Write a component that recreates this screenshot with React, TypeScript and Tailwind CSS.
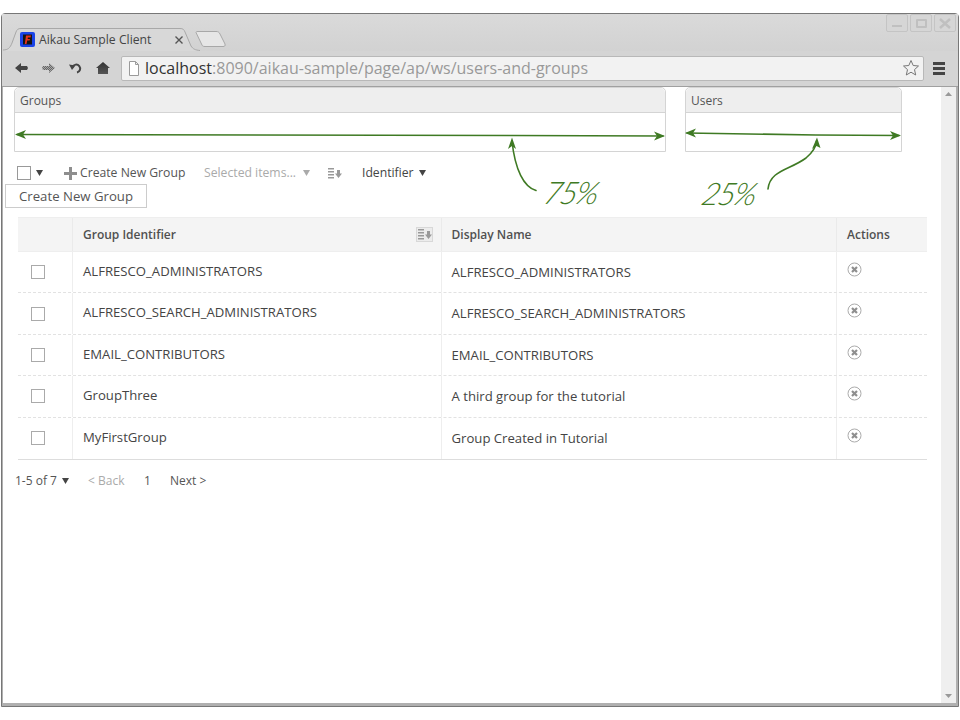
import React from "react";

const rows = [
  { id: "ALFRESCO_ADMINISTRATORS", name: "ALFRESCO_ADMINISTRATORS" },
  { id: "ALFRESCO_SEARCH_ADMINISTRATORS", name: "ALFRESCO_SEARCH_ADMINISTRATORS" },
  { id: "EMAIL_CONTRIBUTORS", name: "EMAIL_CONTRIBUTORS" },
  { id: "GroupThree", name: "A third group for the tutorial" },
  { id: "MyFirstGroup", name: "Group Created in Tutorial" },
];

const Caret = ({ className }: { className: string }) => (
  <svg width="7" height="6" viewBox="0 0 7 6" className={className}>
    <path d="M0 0h7L3.500 6z" fill="currentColor" />
  </svg>
);

const SortIcon = () => (
  <svg width="14" height="11" viewBox="0 0 14 11" fill="#999999">
    <path d="M0 0h6v1.500H0zM0 3h6v1.500H0zM0 6h6v1.500H0zM0 9h6v1.500H0zM9 2h3v3.500h2L10.500 10 7 5.500h2z" />
  </svg>
);

const RemoveIcon = () => (
  <svg width="15" height="15" viewBox="0 0 15 15" fill="none">
    <circle cx="7.500" cy="7.500" r="6.500" stroke="#ababab" />
    <path d="M5 5l5 5M10 5l-5 5" stroke="#8f8f8f" strokeWidth="2.200" />
  </svg>
);

const Panel = ({ title, width }: { title: string; width: string }) => (
  <div className={`${width} h-[65px] rounded-t-[5px] border border-[#d4d4d4] bg-white`}>
    <div className="h-[25px] rounded-t-[5px] border-b border-[#d4d4d4] bg-[#eeeeee] pl-[5px] text-[12px] leading-[25px] text-[#555555]">
      {title}
    </div>
  </div>
);

const WinButton = ({ children }: { children: React.ReactNode }) => (
  <div className="flex h-[18px] w-[22px] items-center justify-center rounded-[2px] border border-[#c4c4c4] bg-[#d6d6d6]">
    {children}
  </div>
);

const Annotations = () => (
  <>
    <svg width="960" height="720" viewBox="0 0 960 720" fill="none" className="pointer-events-none absolute left-0 top-0">
      <g stroke="#3f7a24" strokeWidth="1.600" strokeLinecap="round">
        <path d="M17 134.500L512 135.500L663 136" />
        <path d="M687 133L816 135L899 135.500" />
        <path d="M536 190.500C524 187 515 170 512 141" />
        <path d="M768 189C770 170 790 170 806 158C812 153 816 148 816.500 141" />
      </g>
      <g fill="#3f7a24">
        <path d="M15 134.500L26 130L23 134.500L26 139z" />
        <path d="M665 136L654 131.500L657 136L654 140.500z" />
        <path d="M685 133L696 128.500L693 133L696 137.500z" />
        <path d="M901 135.500L890 131L893 135.500L890 140z" />
        <path d="M512 137.500L508 149L512 146L516 149z" />
        <path d="M817 137.500L812 149L816.500 146L820.500 148z" />
      </g>
    </svg>
    <span className="absolute left-[545px] top-[173px] skew-x-[-14deg] font-['Lato'] text-[31px] font-light italic leading-[38px] tracking-[-2px] text-[#3f7a24]">
      75%
    </span>
    <span className="absolute left-[703px] top-[174px] skew-x-[-14deg] font-['Lato'] text-[31px] font-light italic leading-[38px] tracking-[-2px] text-[#3f7a24]">
      25%
    </span>
  </>
);

export default function App() {
  return (
    <div className="relative h-[720px] w-[960px] overflow-hidden bg-white pl-[1px] pt-[13px] font-['Open_Sans',sans-serif]">
      <div className="flex h-[694px] w-[958px] flex-col rounded-t-[4px] border border-[#777777] bg-[#d4d4d4]">
        {/* Tab strip */}
        <div className="relative flex h-[37px] bg-gradient-to-b from-[#dadada] to-[#d2d2d2] pl-[1px] pt-[14px]">
          <div className="relative h-[23px] w-[197px] pl-[17px] pt-[4px]">
            <svg width="197" height="23" viewBox="0 0 197 23" fill="none" className="absolute left-0 top-0">
              <path d="M0 23V22C5 22 7 20 9 15L13 4C14 1.500 15 .5 18 .5H177C180 .5 181 1.500 182 4L188 18C190 21 192 22 197 22.500V23z" fill="#d8d8d8" />
              <path d="M0 22C5 22 7 20 9 15L13 4C14 1.500 15 .5 18 .5H177C180 .5 181 1.500 182 4L188 18C190 21 192 22 197 22.500" stroke="#a8a8a8" />
            </svg>
            <div className="relative flex items-center">
              <svg width="15" height="15" viewBox="0 0 15 15">
                <rect width="15" height="15" rx="2" fill="#1a44e8" />
                <path d="M3 2.500h9v10H3z" fill="#151515" />
                <path d="M6 3.500h5l-.5 2H8l-.4 1.500h2.400l-.4 1.500H7.200L6.500 12H4.800z" fill="#e8321c" />
              </svg>
              <span className="ml-[4px] w-[136px] text-[12.200px] leading-[15px] text-[#444444]">Aikau Sample Client</span>
              <svg width="8" height="8" viewBox="0 0 8 8" stroke="#555555" strokeWidth="1.400">
                <path d="M0.500 0.500l7 7M7.500 0.500l-7 7" />
              </svg>
            </div>
          </div>
          <svg width="32" height="17" viewBox="0 0 32 17" fill="none" className="-ml-[5px] mt-[3px]">
            <path d="M1 1.500C1 1 1.500 .5 2 .5H21C23 .5 24 1 25 3L30 13C30.500 15 29.500 15.500 28 15.500H10C8 15.500 7.500 15 7 14z" fill="#e6e6e6" stroke="#a8a8a8" />
          </svg>
          <div className="absolute right-[2px] top-0 flex gap-[2px]">
            <WinButton>
              <div className="mt-[5px] h-[2px] w-[10px] bg-[#c0c0c0]" />
            </WinButton>
            <WinButton>
              <div className="h-[9px] w-[11px] rounded-[1px] border-2 border-[#c0c0c0]" />
            </WinButton>
            <WinButton>
              <svg width="12" height="11" viewBox="0 0 12 11" stroke="#c0c0c0" strokeWidth="2.500">
                <path d="M1 1l10 9M11 1L1 10" />
              </svg>
            </WinButton>
          </div>
        </div>

        {/* Toolbar */}
        <div className="flex h-[36px] items-center border-b border-[#a0a0a0] bg-[#d4d4d4] pb-[1px] pl-[13px]">
          <svg width="13" height="10" viewBox="0 0 13 10" fill="#444444" className="mr-[14px]">
            <path d="M0 5l6-5v3h6l1 2-1 2H6v3z" />
          </svg>
          <svg width="13" height="10" viewBox="0 0 13 10" className="mr-[14px]">
            <defs>
              <pattern id="checker" width="2" height="2" patternUnits="userSpaceOnUse">
                <rect width="2" height="2" fill="#a8a8a8" />
                <rect width="1" height="1" fill="#666666" />
                <rect x="1" y="1" width="1" height="1" fill="#666666" />
              </pattern>
            </defs>
            <path d="M13 5L7 0v3H1L0 5l1 2h6v3z" fill="url(#checker)" />
          </svg>
          <svg width="13" height="14" viewBox="0 0 13 14" fill="none" className="mr-[14px]">
            <path d="M3.500 6.500V6a4 4 0 1 1 4.500 5.500" stroke="#444444" strokeWidth="2" />
            <path d="M0 3.500l6.500 1-3.500 4.500z" fill="#444444" />
          </svg>
          <svg width="14" height="12" viewBox="0 0 14 12" className="mr-[11px]">
            <defs>
              <linearGradient id="home" x1="0" y1="0" x2="0" y2="1">
                <stop offset="0" stopColor="#333333" />
                <stop offset="1" stopColor="#555555" />
              </linearGradient>
            </defs>
            <path d="M7 0l7 6h-2v6H2V6H0z" fill="url(#home)" />
          </svg>
          <div className="flex h-[25px] w-[803px] items-center rounded-[2px] border border-[#b8b8b8] bg-[#f2f2f2] pl-[6px]">
            <svg width="12" height="15" viewBox="0 0 12 15" fill="none" stroke="#9a9a9a">
              <path d="M1.500 .5H7.500L10.500 3.500V14.500H1.500zM7.500 .5V3.500H10.500" fill="#ffffff" />
            </svg>
            <span className="ml-[5px] flex-1 whitespace-nowrap text-[16px] leading-[23px] text-[#999999]">
              <span className="text-[#333333]">localhost</span>:8090/aikau-sample/page/ap/ws/users-and-groups
            </span>
            <svg width="18" height="18" viewBox="0 0 18 18" fill="none" stroke="#777777" className="mr-[3px]">
              <path d="M9 1.500l2.200 5 5.300.5-4 3.600 1.200 5.400L9 13.200 4.300 16l1.200-5.400-4-3.600 5.300-.5z" />
            </svg>
          </div>
          <div className="ml-[9px] flex w-[12px] flex-col gap-[2px]">
            <div className="h-[3px] bg-[#444444]" />
            <div className="h-[3px] bg-[#444444]" />
            <div className="h-[3px] bg-[#444444]" />
          </div>
        </div>

        {/* Page */}
        <div className="flex min-h-0 flex-1 border-b-[3px] border-l border-r-2 border-[#b0b0b0] bg-white">
          <div className="w-[938px] pl-[2px]">
            <div className="ml-[9px] flex gap-[19px]">
              <Panel title="Groups" width="w-[652px]" />
              <Panel title="Users" width="w-[217px]" />
            </div>

            <div className="mt-[13px] flex h-[16px] items-center text-[12.200px] text-[#555555]">
              <div className="ml-[12px] h-[14px] w-[14px] border border-[#999999] bg-white" />
              <Caret className="ml-[5px] text-[#444444]" />
              <svg width="13" height="13" viewBox="0 0 13 13" fill="#8e8e8e" className="ml-[21px]">
                <path d="M5 0h3v5h5v3H8v5H5V8H0V5h5z" />
              </svg>
              <span className="ml-[3px] w-[124px]">Create New Group</span>
              <span className="w-[99px] text-[#aaaaaa]">Selected items...</span>
              <Caret className="text-[#aaaaaa]" />
              <div className="ml-[18px]">
                <SortIcon />
              </div>
              <span className="ml-[20px] text-[#444444]">Identifier</span>
              <Caret className="ml-[5px] text-[#444444]" />
            </div>

            <div className="mt-[3px] h-[24px] w-[142px] border border-[#cccccc] bg-white pl-[13px] text-[13.200px] leading-[22px] text-[#555555]">
              Create New Group
            </div>

            {/* Table */}
            <div className="ml-[13px] mt-[9px] w-[909px] border-b border-[#dddddd] text-[13.150px] text-[#444444]">
              <div className="flex h-[35px] border-y border-[#eeeeee] bg-[#f4f4f4] text-[12px] font-semibold leading-[33px] text-[#505050]">
                <div className="w-[55px] border-r border-[#eaeaea]" />
                <div className="flex w-[369px] items-center justify-between border-r border-[#eaeaea] pl-[10px] pr-[8px]">
                  <span>Group Identifier</span>
                  <div className="flex h-[15px] w-[17px] items-center justify-center border border-[#d8d8d8] bg-[#ececec]">
                    <SortIcon />
                  </div>
                </div>
                <div className="w-[395px] border-r border-[#eaeaea] pl-[9.500px]">Display Name</div>
                <div className="flex-1 pl-[10px]">Actions</div>
              </div>
              {rows.map((row, i) => (
                <div
                  key={row.id}
                  className={`flex h-[41.400px] ${i < rows.length - 1 ? "border-b border-dashed border-[#e2e2e2]" : ""}`}
                >
                  <div className="flex w-[55px] items-center border-r border-[#eeeeee] pl-[13px]">
                    <div className="h-[14px] w-[14px] border border-[#aaaaaa] bg-white" />
                  </div>
                  <div className="w-[369px] border-r border-[#eeeeee] pl-[10px] pt-[10px] leading-[18px]">{row.id}</div>
                  <div className="w-[395px] border-r border-[#eeeeee] pl-[9.500px] pt-[11px] leading-[18px]">{row.name}</div>
                  <div className="flex-1 pl-[10px] pt-[10px]">
                    <RemoveIcon />
                  </div>
                </div>
              ))}
            </div>

            <div className="mt-[11px] flex h-[20px] items-center text-[12px] text-[#555555]">
              <span className="ml-[10px] w-[47px]">1-5 of 7</span>
              <Caret className="text-[#444444]" />
              <span className="ml-[19px] w-[56px] text-[#aaaaaa]">&lt; Back</span>
              <span className="w-[26px]">1</span>
              <span>Next &gt;</span>
            </div>
          </div>

          {/* Scrollbar */}
          <div className="flex w-[15px] flex-col items-center justify-between bg-[#efefef] py-[5px]">
            <svg width="7" height="4" viewBox="0 0 7 4" fill="#999999">
              <path d="M3.500 0L7 4H0z" />
            </svg>
            <svg width="7" height="4" viewBox="0 0 7 4" fill="#999999">
              <path d="M0 0h7L3.500 4z" />
            </svg>
          </div>
        </div>
      </div>
      <Annotations />
    </div>
  );
}
